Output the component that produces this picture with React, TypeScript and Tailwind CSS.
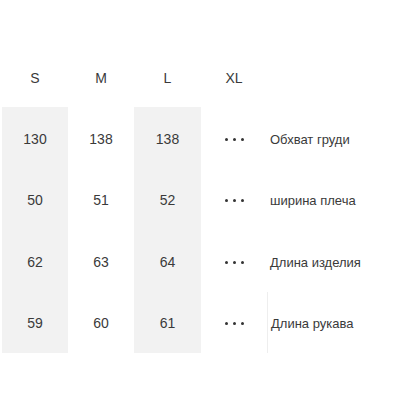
import React from "react";

const rows = [
  { v: ["130", "138", "138"], label: "Обхват груди" },
  { v: ["50", "51", "52"], label: "ширина плеча" },
  { v: ["62", "63", "64"], label: "Длина изделия" },
  { v: ["59", "60", "61"], label: "Длина рукава" },
];

function Dots() {
  return (
    <div className="flex items-center gap-[5px]">
      <span className="w-[3px] h-[3px] rounded-full bg-[#333]" />
      <span className="w-[3px] h-[3px] rounded-full bg-[#333]" />
      <span className="w-[3px] h-[3px] rounded-full bg-[#333]" />
    </div>
  );
}

export default function App() {
  return (
    <div className="w-[400px] h-[400px] bg-white text-[#3a3a3a] pt-[50px] pl-[2px]" style={{ fontFamily: '"Liberation Sans", Arial, sans-serif' }}>
      <div className="flex">
        {/* S */}
        <div className="w-[66px] flex flex-col">
          <div className="h-[57px] flex items-center justify-center text-[14px]">S</div>
          <div className="bg-[#f2f2f2] h-[246px] flex flex-col">
            {rows.map((r, i) => (
              <div key={i} className="h-[61.5px] flex items-center justify-center text-[14px] pt-[3px]">{r.v[0]}</div>
            ))}
          </div>
        </div>
        {/* M */}
        <div className="w-[66px] flex flex-col">
          <div className="h-[57px] flex items-center justify-center text-[14px]">M</div>
          <div className="h-[246px] flex flex-col">
            {rows.map((r, i) => (
              <div key={i} className="h-[61.5px] flex items-center justify-center text-[14px] pt-[3px]">{r.v[1]}</div>
            ))}
          </div>
        </div>
        {/* L */}
        <div className="w-[67px] flex flex-col">
          <div className="h-[57px] flex items-center justify-center text-[14px]">L</div>
          <div className="bg-[#f2f2f2] h-[246px] flex flex-col">
            {rows.map((r, i) => (
              <div key={i} className="h-[61.5px] flex items-center justify-center text-[14px] pt-[3px]">{r.v[2]}</div>
            ))}
          </div>
        </div>
        {/* XL */}
        <div className="w-[66px] flex flex-col">
          <div className="h-[57px] flex items-center justify-center text-[14px]">XL</div>
          <div className="h-[246px] flex flex-col">
            {rows.map((r, i) => (
              <div key={i} className="h-[61.5px] flex items-center justify-center pt-[3px]"><Dots /></div>
            ))}
          </div>
        </div>
        {/* labels */}
        <div className="flex-1 flex flex-col">
          <div className="h-[57px]" />
          <div className="h-[246px] flex flex-col">
            {rows.map((r, i) => (
              <div key={i} className={`h-[61.5px] flex items-center pl-[3px] text-[13px] pt-[3px] ${i === 3 ? "border-l border-[#eeeeee]" : ""}`}>{r.label}</div>
            ))}
          </div>
        </div>
      </div>
    </div>
  );
}
